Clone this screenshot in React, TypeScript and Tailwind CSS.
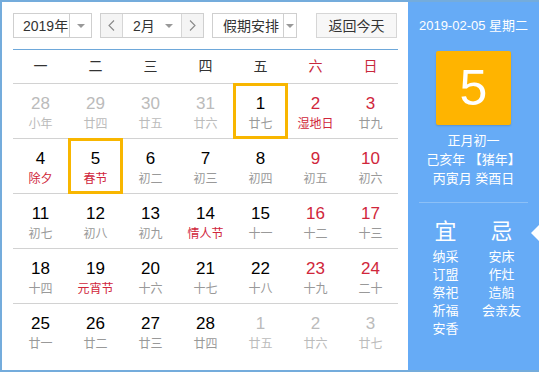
import React from "react";

type Day = { n: number; l: string; other?: boolean; redNum?: boolean; redLunar?: boolean; box?: boolean };

const rows: Day[][] = [
  [
    { n: 28, l: "小年", other: true },
    { n: 29, l: "廿四", other: true },
    { n: 30, l: "廿五", other: true },
    { n: 31, l: "廿六", other: true },
    { n: 1, l: "廿七", box: true },
    { n: 2, l: "湿地日", redNum: true, redLunar: true },
    { n: 3, l: "廿九", redNum: true },
  ],
  [
    { n: 4, l: "除夕", redLunar: true },
    { n: 5, l: "春节", redLunar: true, box: true },
    { n: 6, l: "初二" },
    { n: 7, l: "初三" },
    { n: 8, l: "初四" },
    { n: 9, l: "初五", redNum: true },
    { n: 10, l: "初六", redNum: true },
  ],
  [
    { n: 11, l: "初七" },
    { n: 12, l: "初八" },
    { n: 13, l: "初九" },
    { n: 14, l: "情人节", redLunar: true },
    { n: 15, l: "十一" },
    { n: 16, l: "十二", redNum: true },
    { n: 17, l: "十三", redNum: true },
  ],
  [
    { n: 18, l: "十四" },
    { n: 19, l: "元宵节", redLunar: true },
    { n: 20, l: "十六" },
    { n: 21, l: "十七" },
    { n: 22, l: "十八" },
    { n: 23, l: "十九", redNum: true },
    { n: 24, l: "二十", redNum: true },
  ],
  [
    { n: 25, l: "廿一" },
    { n: 26, l: "廿二" },
    { n: 27, l: "廿三" },
    { n: 28, l: "廿四" },
    { n: 1, l: "廿五", other: true },
    { n: 2, l: "廿六", other: true },
    { n: 3, l: "廿七", other: true },
  ],
];

const weekdays = ["一", "二", "三", "四", "五", "六", "日"];

function Arrow() {
  return <span className="w-0 h-0 border-x-[4px] border-x-transparent border-t-[4px] border-t-[#999]" />;
}

function Chevron({ dir }: { dir: "l" | "r" }) {
  return (
    <svg width="7" height="11" viewBox="0 0 7 11">
      <polyline
        points={dir === "l" ? "6,0.5 1,5.5 6,10.5" : "1,0.5 6,5.5 1,10.5"}
        fill="none"
        stroke="#888"
        strokeWidth="1.1"
      />
    </svg>
  );
}

export default function App() {
  return (
    <div
      className="w-[539px] h-[372px] overflow-hidden bg-white"
      style={{ fontFamily: '"Liberation Sans", "Noto Sans CJK SC", sans-serif' }}
    >
      <div className="flex h-[372px] border-l-2 border-t-2 border-b-2 border-[#74acdc]">
        {/* Left panel */}
        <div className="w-[406px] shrink-0 pl-[11px] pt-[11px]">
          <div className="flex h-[25px] text-[14px] text-[#333] whitespace-nowrap">
            <div className="w-[79px] flex border border-[#cfcfcf]">
              <div className="w-[55px] flex items-center pl-[9px] leading-none">2019年</div>
              <div className="flex-1 flex items-center justify-center border-l border-[#cfcfcf]">
                <Arrow />
              </div>
            </div>
            <div className="ml-[8px] w-[104px] flex border border-[#cfcfcf]">
              <div className="w-[22px] flex items-center justify-center bg-[#f4f4f4] border-r border-[#d6d6d6]">
                <Chevron dir="l" />
              </div>
              <div className="flex-1 flex items-center pl-[10px] pr-[8px] justify-between leading-none">
                <span>2月</span>
                <Arrow />
              </div>
              <div className="w-[22px] flex items-center justify-center bg-[#f4f4f4] border-l border-[#d6d6d6]">
                <Chevron dir="r" />
              </div>
            </div>
            <div className="ml-[8px] w-[85px] flex border border-[#cfcfcf]">
              <div className="w-[70px] flex items-center pl-[10px] leading-none">假期安排</div>
              <div className="flex-1 flex items-center justify-center border-l border-[#cfcfcf]">
                <Arrow />
              </div>
            </div>
            <div className="ml-[19px] w-[81px] flex items-center justify-center border border-[#d6d6d6] bg-[#f7f7f7] leading-none">
              返回今天
            </div>
          </div>

          <div className="w-[385px] mt-[11px] border-t border-[#6ea8da]" />
          <div className="w-[385px] h-[34px] grid grid-cols-7 items-center border-b border-[#d2d2d2] text-[14px]">
            {weekdays.map((w, i) => (
              <div key={w} className={`text-center ${i >= 5 ? "text-[#c8283c]" : "text-[#333]"}`}>
                {w}
              </div>
            ))}
          </div>

          <div className="w-[385px]">
            {rows.map((row, ri) => (
              <div
                key={ri}
                className={`grid grid-cols-7 h-[55px] ${ri < rows.length - 1 ? "border-b border-[#d2d2d2]" : ""}`}
              >
                {row.map((d, ci) => {
                  const numColor = d.other ? "text-[#bbbbbb]" : d.redNum ? "text-[#d0263b]" : "text-[#000]";
                  const lunColor = d.other ? "text-[#bbbbbb]" : d.redLunar ? "text-[#d0263b]" : "text-[#999]";
                  return (
                    <div key={ci} className="relative flex flex-col items-center pt-[10px]">
                      {d.box && (
                        <div className="absolute -top-px left-0 right-0 -bottom-px border-[3px] border-[#f8b600]" />
                      )}
                      <div className={`text-[17px] leading-[20px] ${numColor}`}>{d.n}</div>
                      <div className={`text-[12px] leading-[16px] mt-[2px] whitespace-nowrap ${lunColor}`}>{d.l}</div>
                    </div>
                  );
                })}
              </div>
            ))}
          </div>
        </div>

        {/* Right panel */}
        <div className="relative flex-1 bg-[#66abf6] flex flex-col items-center text-white pt-[14px] whitespace-nowrap">
          <div className="text-[13px] leading-[20px]">2019-02-05 星期二</div>
          <div className="mt-[15px] w-[75px] h-[74px] bg-[#ffb400] rounded-[2px] shadow-[0_1px_2px_rgba(0,0,0,0.15)] flex items-center justify-center text-[50px] leading-none">
            5
          </div>
          <div className="mt-[6px] text-[13px] leading-[19px] text-center">
            <div>正月初一</div>
            <div>己亥年 【猪年】</div>
            <div>丙寅月 癸酉日</div>
          </div>
          <div className="mt-[14px] w-[109px] border-t border-[#8cc0f7]" />
          <div className="mt-[15px] grid grid-cols-[56px_56px] text-center">
            <div className="text-[22px] leading-[28px]">宜</div>
            <div className="text-[22px] leading-[28px]">忌</div>
            <div className="mt-[2px] text-[13px] leading-[18px]">
              <div>纳采</div>
              <div>订盟</div>
              <div>祭祀</div>
              <div>祈福</div>
              <div>安香</div>
            </div>
            <div className="mt-[2px] text-[13px] leading-[18px]">
              <div>安床</div>
              <div>作灶</div>
              <div>造船</div>
              <div>会亲友</div>
            </div>
          </div>
          <div className="absolute right-0 top-[223px] w-0 h-0 border-y-[8px] border-y-transparent border-r-[8px] border-r-white" />
        </div>
      </div>
    </div>
  );
}
